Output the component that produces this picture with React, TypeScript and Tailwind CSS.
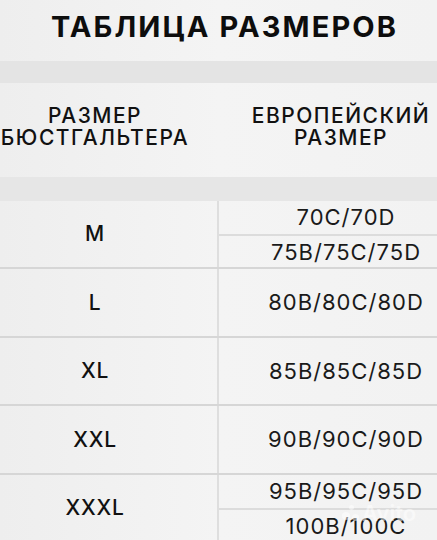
import React from "react";

const font = { fontFamily: "Inter, 'Open Sans', sans-serif" };

function Row({ left, right, h }: { left: string; right: string[]; h: string }) {
  return (
    <div className={`flex ${h} border-b-2 border-[#d6d6d6]`}>
      <div className="w-[217px] shrink-0 flex items-center justify-center pr-[27px] text-[21px] font-medium text-[#111] tracking-[0.8px]">
        {left}
      </div>
      <div className="w-[2px] shrink-0 bg-[#dedede]" />
      <div className="flex-1 flex flex-col">
        {right.map((r, i) => (
          <div
            key={i}
            className={`flex-1 flex items-center justify-center pl-[36px] text-[22px] text-[#1a1a1a] tracking-[1px] ${
              i < right.length - 1 ? "border-b-2 border-[#dcdcdc]" : ""
            }`}
          >
            {r}
          </div>
        ))}
      </div>
    </div>
  );
}

export default function App() {
  return (
    <div
      className="w-[437px] h-[540px] overflow-hidden relative bg-gradient-to-r from-[#eeeeee] via-[#f4f4f4] to-[#f2f2f2]"
      style={font}
    >
      <div className="h-[61px] flex items-start justify-center pt-[5px]">
        <h1 className="text-[29px] font-bold text-[#0d0d0d] tracking-[2.1px] pl-[12px] whitespace-nowrap">
          ТАБЛИЦА РАЗМЕРОВ
        </h1>
      </div>
      <div className="h-[22px] bg-[#e4e4e4]" />
      <div className="h-[94px] flex items-center pb-[7px]">
        <div className="w-[217px] shrink-0 flex justify-center pr-[27px]">
          <div className="text-center text-[21px] font-medium leading-[22px] text-[#111] tracking-[1.5px] whitespace-nowrap">
            РАЗМЕР
            <br />
            БЮСТГАЛЬТЕРА
          </div>
        </div>
        <div className="flex-1 flex justify-center pl-[28px]">
          <div className="text-center text-[21px] font-medium leading-[22px] text-[#111] tracking-[1.5px] whitespace-nowrap">
            ЕВРОПЕЙСКИЙ
            <br />
            РАЗМЕР
          </div>
        </div>
      </div>
      <div className="h-[24px] bg-[#e6e6e6]" />
      <Row left="M" right={["70C/70D", "75B/75C/75D"]} h="h-[68px]" />
      <Row left="L" right={["80B/80C/80D"]} h="h-[69px]" />
      <Row left="XL" right={["85B/85C/85D"]} h="h-[68px]" />
      <Row left="XXL" right={["90B/90C/90D"]} h="h-[69px]" />
      <Row left="XXXL" right={["95B/95C/95D", "100B/100C"]} h="h-[68px]" />
      <div className="absolute left-[340px] top-[497px] flex items-center gap-[2px] text-white/50 text-[22px] font-semibold pointer-events-none">
        <span className="relative w-[20px] h-[20px]">
          <span className="absolute left-[2px] top-[8px] w-[8px] h-[8px] rounded-full bg-white/50" />
          <span className="absolute left-[9px] top-[1px] w-[5px] h-[5px] rounded-full bg-white/50" />
          <span className="absolute left-[12px] top-[10px] w-[7px] h-[7px] rounded-full bg-white/50" />
        </span>
        Avito
      </div>
    </div>
  );
}
